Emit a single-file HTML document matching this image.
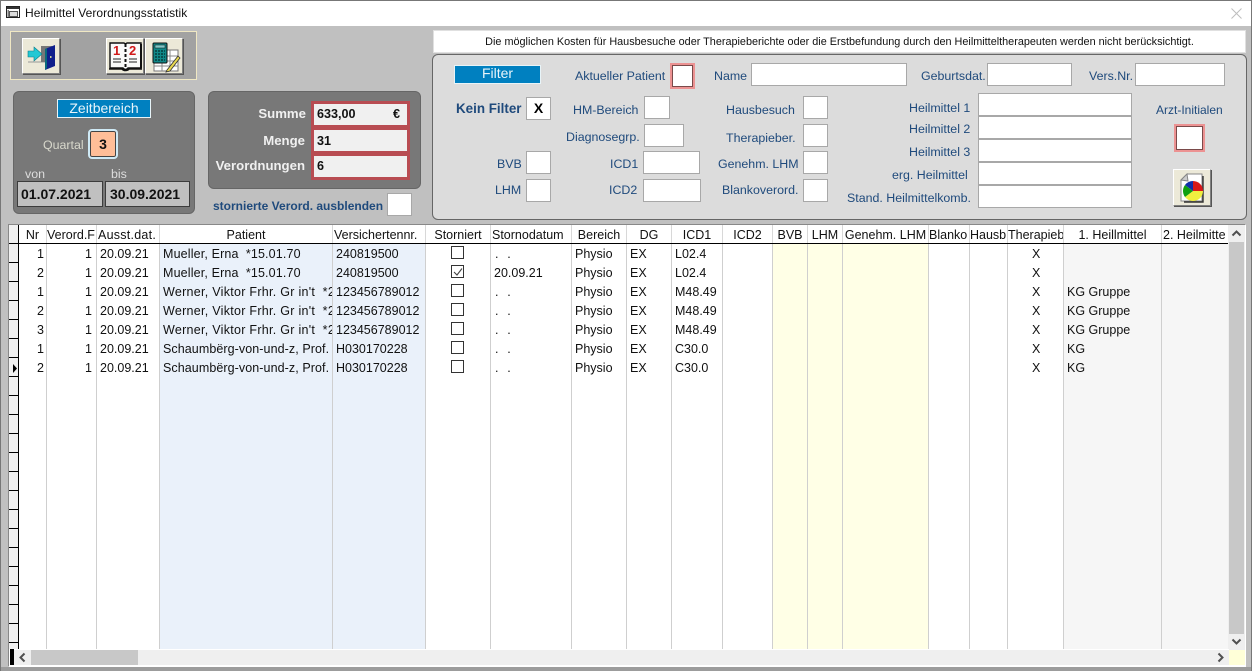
<!DOCTYPE html>
<html><head><meta charset="utf-8"><title>Heilmittel Verordnungsstatistik</title>
<style>
html,body{margin:0;padding:0}
body{width:1252px;height:671px;overflow:hidden;position:relative;background:#c0c0c0;font-family:"Liberation Sans",Arial,sans-serif;font-size:12px;color:#111}
div,span,svg{position:absolute;box-sizing:border-box}
.l{color:#1f4a7c;white-space:pre;line-height:14px;height:14px;font-size:12.4px}
.r{text-align:right}
.b{background:#fff;border:1px solid #a8a8a8}
.rb{background:#fff;border:1px solid #7a4a4a;outline:2px solid #ec9292;outline-offset:0}
.btn{background:#ece9d8;border:1px solid;border-color:#fff #808080 #808080 #fff;box-shadow:1px 1px 0 #555}
.blue{background:#0080c0;border:1px solid #e8f4f8;color:#e8f4fa;text-align:center}
.w{color:#f0f0f0;font-weight:bold;font-size:13.2px;text-align:right;line-height:16px;white-space:pre}
.val{background:#f0f0f0;border:3px solid #b84c52;font-weight:bold;font-size:12.6px;line-height:20px;padding-left:3px}
.date{background:#c0c0c0;border:1px solid #3c3c3c;font-weight:bold;font-size:14px;line-height:24px;padding-left:3px;color:#111;white-space:pre}
.col{top:244px;height:405px;border-right:1px solid #cfcfcf}
.h{top:225px;height:18px;line-height:20px;text-align:center;white-space:pre;overflow:hidden;border-right:1px solid #d8d8d8;background:#fff;font-size:12.5px}
.hl{text-align:left;padding-left:1px}
.c{height:19px;line-height:21px;white-space:pre;overflow:hidden;font-size:12.5px}
.d{letter-spacing:.6px}
.pw{letter-spacing:.28px}
.pm{letter-spacing:.15px}
.ps{letter-spacing:.08px}
.ind{left:9px;width:10px;height:19px;background:#f0f0f0;border-bottom:1px solid #000;border-right:1px solid #000}
.cb{left:451px;width:13px;height:13px;border:1px solid #333;background:#fff}
</style></head><body>
<!-- title bar -->
<div style="left:0;top:0;width:1252px;height:26px;background:#fff"></div>
<div style="left:0;top:0;width:1252px;height:1px;background:#777"></div>
<div style="left:0;top:0;width:1px;height:671px;background:#777"></div>
<div style="left:1251px;top:0;width:1px;height:671px;background:#777"></div>
<svg style="left:6px;top:6px" width="14" height="13" viewBox="0 0 14 13"><rect x=".5" y=".5" width="13" height="11" fill="#fff" stroke="#222"/><rect x="1" y="1" width="12" height="2" fill="#333"/><rect x="3.5" y="5.5" width="8" height="5" fill="#ddd" stroke="#555"/><rect x="1.5" y="4" width="1.5" height="7" fill="#777"/></svg>
<div style="left:25px;top:6px;line-height:14px;color:#111;font-size:12px;white-space:pre;letter-spacing:.05px">Heilmittel Verordnungsstatistik</div>
<svg style="left:1230px;top:7px" width="13" height="13"><path d="M1.5 1.5L11.5 11.5M11.5 1.5L1.5 11.5" stroke="#bdbdbd" stroke-width="1"/></svg>

<!-- toolbar -->
<div style="left:10px;top:31px;width:187px;height:49px;background:#a2a2a2;border:1px solid #f0e8c4"></div>
<div class="btn" style="left:22px;top:38px;width:38px;height:36px">
<svg style="left:3px;top:3px" width="32" height="29" viewBox="0 0 32 29"><path d="M2 20H27" stroke="#999" fill="none"/><rect x="15" y="4" width="11" height="16" fill="#777"/><path d="M19 7L29 3V24L19 28Z" fill="#10208c"/><path d="M19 7L21 6V26L19 28Z" fill="#0a6a7c"/><rect x="24" y="14" width="1.5" height="2" fill="#cc9"/><path d="M2 9H8V5L16 12L8 19V15H2Z" fill="#22c8d4" stroke="#0a7c88" stroke-width=".6"/></svg></div>
<div class="btn" style="left:106px;top:38px;width:38px;height:36px">
<svg style="left:1px;top:2px" width="35" height="31" viewBox="0 0 35 31"><path d="M2 2H16C17 3 18 3 19 2H33V27H20C18 29 17 29 15 27H2Z" fill="#fafafa" stroke="#111" stroke-width="1.4"/><path d="M1 28H14C16 30 19 30 21 28H34" stroke="#111" stroke-width="1.6" fill="none"/><path d="M33 3V27" stroke="#111" stroke-width="2"/><path d="M17.5 3V27" stroke="#111" stroke-width="2" stroke-dasharray="3 2"/><text x="5" y="14" font-family="Liberation Sans" font-weight="bold" font-size="13" fill="#d01818">1</text><text x="21" y="14" font-family="Liberation Sans" font-weight="bold" font-size="13" fill="#d01818">2</text><path d="M5 18H13M5 21H13M21 18H29M21 21H29" stroke="#222"/></svg></div>
<div class="btn" style="left:145px;top:38px;width:38px;height:36px">
<svg style="left:2px;top:2px" width="34" height="32" viewBox="0 0 34 32"><path d="M6 9H30V30H6Z" fill="#fff" stroke="#777"/><path d="M6 15H30M6 20H30M6 25H30M14 9V30M22 9V30" stroke="#888"/><rect x="5" y="2" width="14" height="20" rx="1" fill="#108888" stroke="#111"/><rect x="7" y="4" width="10" height="3" fill="#80c8c8" stroke="#111" stroke-width=".5"/><path d="M7 10H17M7 13H17M7 16H17M7 19H17" stroke="#063c3c" stroke-width="1.5" stroke-dasharray="2 1"/><path d="M19 29L30 15L32 17L22 30L18 31Z" fill="#e8d850" stroke="#333" stroke-width=".8"/></svg></div>

<!-- Zeitbereich -->
<div style="left:13px;top:91px;width:182px;height:123px;background:#787878;border:1px solid #666;border-radius:6px"></div>
<div class="blue" style="left:57px;top:99px;width:94px;height:19px;font-size:14px;line-height:17px">Zeitbereich</div>
<div style="left:43px;top:138px;color:#d8d8cc;line-height:14px;font-size:12.4px">Quartal</div>
<div style="left:88px;top:129px;width:30px;height:30px;border:2px solid #cfeaf6;border-radius:4px;background:#ffbe98;font-weight:bold;font-size:14px;line-height:26px;text-align:center;box-shadow:inset 0 0 0 1px #444">3</div>
<div style="left:25px;top:167px;color:#ddd;line-height:14px;font-size:12.4px">von</div>
<div style="left:111px;top:167px;color:#ddd;line-height:14px;font-size:12.4px">bis</div>
<div class="date" style="left:17px;top:181px;width:86px;height:26px">01.07.2021</div>
<div class="date" style="left:105px;top:181px;width:85px;height:26px;padding-left:4px">30.09.2021</div>

<!-- Summe -->
<div style="left:208px;top:91px;width:213px;height:98px;background:#787878;border:1px solid #666;border-radius:6px"></div>
<div class="w" style="left:215px;top:106px;width:91px">Summe</div>
<div class="w" style="left:215px;top:133px;width:90px">Menge</div>
<div class="w" style="left:205px;top:158px;width:100px">Verordnungen</div>
<div class="val" style="left:311px;top:101px;width:99px;height:27px">633,00<span style="left:79px;top:0">€</span></div>
<div class="val" style="left:311px;top:127px;width:99px;height:27px"><span style="left:3px;top:1px">31</span></div>
<div class="val" style="left:311px;top:153px;width:99px;height:27px">6</div>
<div style="left:213px;top:199px;color:#1f4a7c;font-weight:bold;font-size:12px;line-height:14px;white-space:pre">stornierte Verord. ausblenden</div>
<div class="b" style="left:387px;top:193px;width:25px;height:23px"></div>

<!-- notice -->
<div style="left:433px;top:30px;width:813px;height:23px;background:#fff;border:1px solid #e0e0e0;text-align:center;font-size:10.85px;line-height:22px;white-space:pre">Die möglichen Kosten für Hausbesuche oder Therapieberichte oder die Erstbefundung durch den Heilmitteltherapeuten werden nicht berücksichtigt.</div>

<!-- filter panel -->
<div style="left:432px;top:54px;width:815px;height:166px;background:#dcdcdc;border:1px solid #666;border-radius:6px"></div>
<div class="blue" style="left:454px;top:65px;width:87px;height:19px;font-size:14px;line-height:15px">Filter</div>
<div class="l" style="left:575px;top:69px">Aktueller Patient</div>
<div class="rb" style="left:672px;top:65px;width:21px;height:22px"></div>
<div class="l" style="left:714px;top:69px">Name</div>
<div class="b" style="left:751px;top:63px;width:156px;height:23px"></div>
<div class="l" style="left:921px;top:69px">Geburtsdat.</div>
<div class="b" style="left:987px;top:63px;width:85px;height:23px"></div>
<div class="l" style="left:1089px;top:69px">Vers.Nr.</div>
<div class="b" style="left:1135px;top:63px;width:90px;height:23px"></div>

<div class="l" style="left:456px;top:102px;font-weight:bold;font-size:13.4px">Kein Filter</div>
<div class="b" style="left:526px;top:97px;width:25px;height:23px;font-weight:bold;font-size:14px;line-height:21px;text-align:center;color:#000">X</div>
<div class="l" style="left:573px;top:103px">HM-Bereich</div>
<div class="b" style="left:644px;top:96px;width:26px;height:23px"></div>
<div class="l" style="left:566px;top:130px">Diagnosegrp.</div>
<div class="b" style="left:644px;top:124px;width:40px;height:23px"></div>
<div class="l" style="left:497px;top:157px">BVB</div>
<div class="b" style="left:526px;top:151px;width:25px;height:23px"></div>
<div class="l" style="left:495px;top:183px">LHM</div>
<div class="b" style="left:526px;top:179px;width:25px;height:23px"></div>
<div class="l" style="left:610px;top:157px">ICD1</div>
<div class="b" style="left:643px;top:151px;width:57px;height:23px"></div>
<div class="l" style="left:609px;top:183px">ICD2</div>
<div class="b" style="left:643px;top:179px;width:58px;height:23px"></div>

<div class="l" style="left:726px;top:103px">Hausbesuch</div>
<div class="b" style="left:803px;top:96px;width:25px;height:23px"></div>
<div class="l" style="left:726px;top:131px">Therapieber.</div>
<div class="b" style="left:803px;top:124px;width:25px;height:23px"></div>
<div class="l" style="left:718px;top:157px">Genehm. LHM</div>
<div class="b" style="left:803px;top:151px;width:25px;height:23px"></div>
<div class="l" style="left:722px;top:183px">Blankoverord.</div>
<div class="b" style="left:803px;top:179px;width:25px;height:23px"></div>

<div class="l" style="left:909px;top:101px">Heilmittel 1</div>
<div class="l" style="left:909px;top:122px">Heilmittel 2</div>
<div class="l" style="left:909px;top:145px">Heilmittel 3</div>
<div class="l" style="left:892px;top:168px">erg. Heilmittel</div>
<div class="l" style="left:847px;top:191px">Stand. Heilmittelkomb.</div>
<div class="b" style="left:978px;top:93px;width:154px;height:23px"></div>
<div class="b" style="left:978px;top:116px;width:154px;height:23px"></div>
<div class="b" style="left:978px;top:139px;width:154px;height:23px"></div>
<div class="b" style="left:978px;top:162px;width:154px;height:23px"></div>
<div class="b" style="left:978px;top:185px;width:154px;height:23px"></div>
<div class="l" style="left:1156px;top:103px;font-size:12px">Arzt-Initialen</div>
<div class="rb" style="left:1176px;top:126px;width:27px;height:24px"></div>
<div class="btn" style="left:1173px;top:169px;width:38px;height:37px">
<svg style="left:4px;top:3px" width="30" height="30" viewBox="0 0 30 30"><path d="M9 1H24V28H3V7Z" fill="#fff" stroke="#888"/><path d="M25 3V29H6" stroke="#333" stroke-width="1.4" fill="none"/><path d="M3 7L9 1L10 8Z" fill="#ccc" stroke="#888"/><path d="M15 18V8A10 10 0 0 1 25 18Z" fill="#d81818"/><path d="M15 18H25A10 10 0 0 1 7 24Z" fill="#f0f040"/><path d="M15 18L7 24A10 10 0 0 1 7 12Z" fill="#10a010"/><path d="M15 18L7 12A10 10 0 0 1 15 8Z" fill="#1030a8"/></svg></div>

<!-- grid -->
<div style="left:8px;top:224px;width:1238px;height:443px;background:#fff;border:1px solid #888;border-bottom:1px solid #fff;border-right:1px solid #fff"></div>
<!-- column backgrounds -->
<div class="col" style="left:19px;width:28px"></div>
<div class="col" style="left:47px;width:50px"></div>
<div class="col" style="left:97px;width:63px"></div>
<div class="col" style="left:160px;width:173px;background:#eaf1fa"></div>
<div class="col" style="left:333px;width:93px;background:#eaf1fa"></div>
<div class="col" style="left:426px;width:65px"></div>
<div class="col" style="left:491px;width:81px"></div>
<div class="col" style="left:572px;width:55px"></div>
<div class="col" style="left:627px;width:45px"></div>
<div class="col" style="left:672px;width:51px"></div>
<div class="col" style="left:723px;width:50px"></div>
<div class="col" style="left:773px;width:35px;background:#ffffe6"></div>
<div class="col" style="left:808px;width:35px;background:#ffffe6"></div>
<div class="col" style="left:843px;width:86px;background:#ffffe6"></div>
<div class="col" style="left:929px;width:41px"></div>
<div class="col" style="left:970px;width:38px"></div>
<div class="col" style="left:1008px;width:56px"></div>
<div class="col" style="left:1064px;width:98px;background:#f6f6f6"></div>
<div class="col" style="left:1162px;width:67px;background:#f6f6f6;border-right:0"></div>
<!-- header -->
<div style="left:9px;top:225px;width:10px;height:19px;background:#f0f0f0;border-bottom:1px solid #000;border-right:1px solid #000"></div>
<div class="h" style="left:19px;width:28px">Nr</div>
<div class="h hl" style="left:47px;width:50px;padding-left:0">Verord.F</div>
<div class="h hl" style="left:97px;width:63px;letter-spacing:.25px">Ausst.dat.</div>
<div class="h" style="left:160px;width:173px">Patient</div>
<div class="h hl" style="left:333px;width:93px">Versichertennr.</div>
<div class="h" style="left:426px;width:65px">Storniert</div>
<div class="h hl" style="left:491px;width:81px">Stornodatum</div>
<div class="h" style="left:572px;width:55px">Bereich</div>
<div class="h" style="left:627px;width:45px">DG</div>
<div class="h" style="left:672px;width:51px">ICD1</div>
<div class="h" style="left:723px;width:50px">ICD2</div>
<div class="h" style="left:773px;width:35px">BVB</div>
<div class="h" style="left:808px;width:35px">LHM</div>
<div class="h" style="left:843px;width:86px">Genehm. LHM</div>
<div class="h" style="left:929px;width:41px;text-align:left">Blanko</div>
<div class="h" style="left:970px;width:38px;text-align:left">Hausb</div>
<div class="h" style="left:1008px;width:56px;text-align:left">Therapieb</div>
<div class="h" style="left:1064px;width:98px">1. Heillmittel</div>
<div class="h" style="left:1162px;width:66px;text-align:left;padding-left:1px;border-right:0">2. Heilmitte</div>
<div style="left:19px;top:243px;width:1209px;height:1px;background:#000"></div>
<!-- indicator cells -->
<div class="ind" style="top:244px"></div><div class="ind" style="top:263px"></div><div class="ind" style="top:282px"></div><div class="ind" style="top:301px"></div><div class="ind" style="top:320px"></div><div class="ind" style="top:339px"></div><div class="ind" style="top:358px"></div><div class="ind" style="top:377px"></div><div class="ind" style="top:396px"></div><div class="ind" style="top:415px"></div><div class="ind" style="top:434px"></div><div class="ind" style="top:453px"></div><div class="ind" style="top:472px"></div><div class="ind" style="top:491px"></div><div class="ind" style="top:510px"></div><div class="ind" style="top:529px"></div><div class="ind" style="top:548px"></div><div class="ind" style="top:567px"></div><div class="ind" style="top:586px"></div><div class="ind" style="top:605px"></div><div class="ind" style="top:624px"></div><div class="ind" style="top:643px;height:6px;border-bottom:0"></div>
<svg style="left:13px;top:364px" width="5" height="9"><path d="M0 0L4 4.5L0 9Z" fill="#000"/></svg>

<!-- row 1 -->
<div class="c r" style="left:19px;top:244px;width:25px">1</div><div class="c r" style="left:47px;top:244px;width:45px">1</div><div class="c" style="left:100px;top:244px">20.09.21</div><div class="c pm" style="left:163px;top:244px;width:169px">Mueller, Erna  *15.01.70</div><div class="c" style="left:336px;top:244px">240819500</div><div class="cb" style="top:246px"></div><div class="c d" style="left:495px;top:244px">.  .</div><div class="c" style="left:575px;top:244px">Physio</div><div class="c" style="left:630px;top:244px">EX</div><div class="c" style="left:675px;top:244px">L02.4</div><div class="c" style="left:1032px;top:244px">X</div>
<!-- row 2 -->
<div class="c r" style="left:19px;top:263px;width:25px">2</div><div class="c r" style="left:47px;top:263px;width:45px">1</div><div class="c" style="left:100px;top:263px">20.09.21</div><div class="c pm" style="left:163px;top:263px;width:169px">Mueller, Erna  *15.01.70</div><div class="c" style="left:336px;top:263px">240819500</div><div class="cb" style="top:265px"><svg style="left:1px;top:1px" width="10" height="10"><path d="M1 5L4 8L9 1.5" stroke="#444" stroke-width="1.1" fill="none"/></svg></div><div class="c" style="left:494px;top:263px">20.09.21</div><div class="c" style="left:575px;top:263px">Physio</div><div class="c" style="left:630px;top:263px">EX</div><div class="c" style="left:675px;top:263px">L02.4</div><div class="c" style="left:1032px;top:263px">X</div>
<!-- row 3 -->
<div class="c r" style="left:19px;top:282px;width:25px">1</div><div class="c r" style="left:47px;top:282px;width:45px">1</div><div class="c" style="left:100px;top:282px">20.09.21</div><div class="c pw" style="left:163px;top:282px;width:169px">Werner, Viktor Frhr. Gr in't  *21.03.52</div><div class="c" style="left:336px;top:282px">123456789012</div><div class="cb" style="top:284px"></div><div class="c d" style="left:495px;top:282px">.  .</div><div class="c" style="left:575px;top:282px">Physio</div><div class="c" style="left:630px;top:282px">EX</div><div class="c" style="left:675px;top:282px">M48.49</div><div class="c" style="left:1032px;top:282px">X</div><div class="c" style="left:1067px;top:282px">KG Gruppe</div>
<!-- row 4 -->
<div class="c r" style="left:19px;top:301px;width:25px">2</div><div class="c r" style="left:47px;top:301px;width:45px">1</div><div class="c" style="left:100px;top:301px">20.09.21</div><div class="c pw" style="left:163px;top:301px;width:169px">Werner, Viktor Frhr. Gr in't  *21.03.52</div><div class="c" style="left:336px;top:301px">123456789012</div><div class="cb" style="top:303px"></div><div class="c d" style="left:495px;top:301px">.  .</div><div class="c" style="left:575px;top:301px">Physio</div><div class="c" style="left:630px;top:301px">EX</div><div class="c" style="left:675px;top:301px">M48.49</div><div class="c" style="left:1032px;top:301px">X</div><div class="c" style="left:1067px;top:301px">KG Gruppe</div>
<!-- row 5 -->
<div class="c r" style="left:19px;top:320px;width:25px">3</div><div class="c r" style="left:47px;top:320px;width:45px">1</div><div class="c" style="left:100px;top:320px">20.09.21</div><div class="c pw" style="left:163px;top:320px;width:169px">Werner, Viktor Frhr. Gr in't  *21.03.52</div><div class="c" style="left:336px;top:320px">123456789012</div><div class="cb" style="top:322px"></div><div class="c d" style="left:495px;top:320px">.  .</div><div class="c" style="left:575px;top:320px">Physio</div><div class="c" style="left:630px;top:320px">EX</div><div class="c" style="left:675px;top:320px">M48.49</div><div class="c" style="left:1032px;top:320px">X</div><div class="c" style="left:1067px;top:320px">KG Gruppe</div>
<!-- row 6 -->
<div class="c r" style="left:19px;top:339px;width:25px">1</div><div class="c r" style="left:47px;top:339px;width:45px">1</div><div class="c" style="left:100px;top:339px">20.09.21</div><div class="c ps" style="left:163px;top:339px;width:169px">Schaumbërg-von-und-z, Prof.</div><div class="c" style="left:336px;top:339px">H030170228</div><div class="cb" style="top:341px"></div><div class="c d" style="left:495px;top:339px">.  .</div><div class="c" style="left:575px;top:339px">Physio</div><div class="c" style="left:630px;top:339px">EX</div><div class="c" style="left:675px;top:339px">C30.0</div><div class="c" style="left:1032px;top:339px">X</div><div class="c" style="left:1067px;top:339px">KG</div>
<!-- row 7 -->
<div class="c r" style="left:19px;top:358px;width:25px">2</div><div class="c r" style="left:47px;top:358px;width:45px">1</div><div class="c" style="left:100px;top:358px">20.09.21</div><div class="c ps" style="left:163px;top:358px;width:169px">Schaumbërg-von-und-z, Prof.</div><div class="c" style="left:336px;top:358px">H030170228</div><div class="cb" style="top:360px"></div><div class="c d" style="left:495px;top:358px">.  .</div><div class="c" style="left:575px;top:358px">Physio</div><div class="c" style="left:630px;top:358px">EX</div><div class="c" style="left:675px;top:358px">C30.0</div><div class="c" style="left:1032px;top:358px">X</div><div class="c" style="left:1067px;top:358px">KG</div>

<!-- vertical scrollbar -->
<div style="left:1228px;top:225px;width:17px;height:425px;background:#efefef"></div>
<div style="left:1229px;top:242px;width:15px;height:392px;background:#c8c8c8"></div>
<svg style="left:1231px;top:229px" width="11" height="9"><path d="M1.5 6.5L5.5 2.5L9.5 6.5" stroke="#505050" stroke-width="2" fill="none"/></svg>
<svg style="left:1231px;top:637px" width="11" height="9"><path d="M1.5 2.5L5.5 6.5L9.5 2.5" stroke="#505050" stroke-width="2" fill="none"/></svg>
<!-- horizontal scrollbar -->
<div style="left:9px;top:649px;width:1220px;height:1px;background:#fff"></div>
<div style="left:10px;top:650px;width:1219px;height:15px;background:#efefef"></div>
<div style="left:10px;top:649px;width:4px;height:16px;background:#000"></div>
<div style="left:31px;top:650px;width:107px;height:15px;background:#c8c8c8"></div>
<svg style="left:18px;top:652px" width="9" height="11"><path d="M6.5 1.5L2.5 5.5L6.5 9.5" stroke="#505050" stroke-width="2" fill="none"/></svg>
<svg style="left:1216px;top:652px" width="9" height="11"><path d="M2.5 1.5L6.5 5.5L2.5 9.5" stroke="#505050" stroke-width="2" fill="none"/></svg>
<div style="left:1229px;top:650px;width:16px;height:15px;background:#ffffd8"></div>
<div style="left:1px;top:667px;width:1250px;height:4px;background:#9c9c9c"></div>
</body></html>
